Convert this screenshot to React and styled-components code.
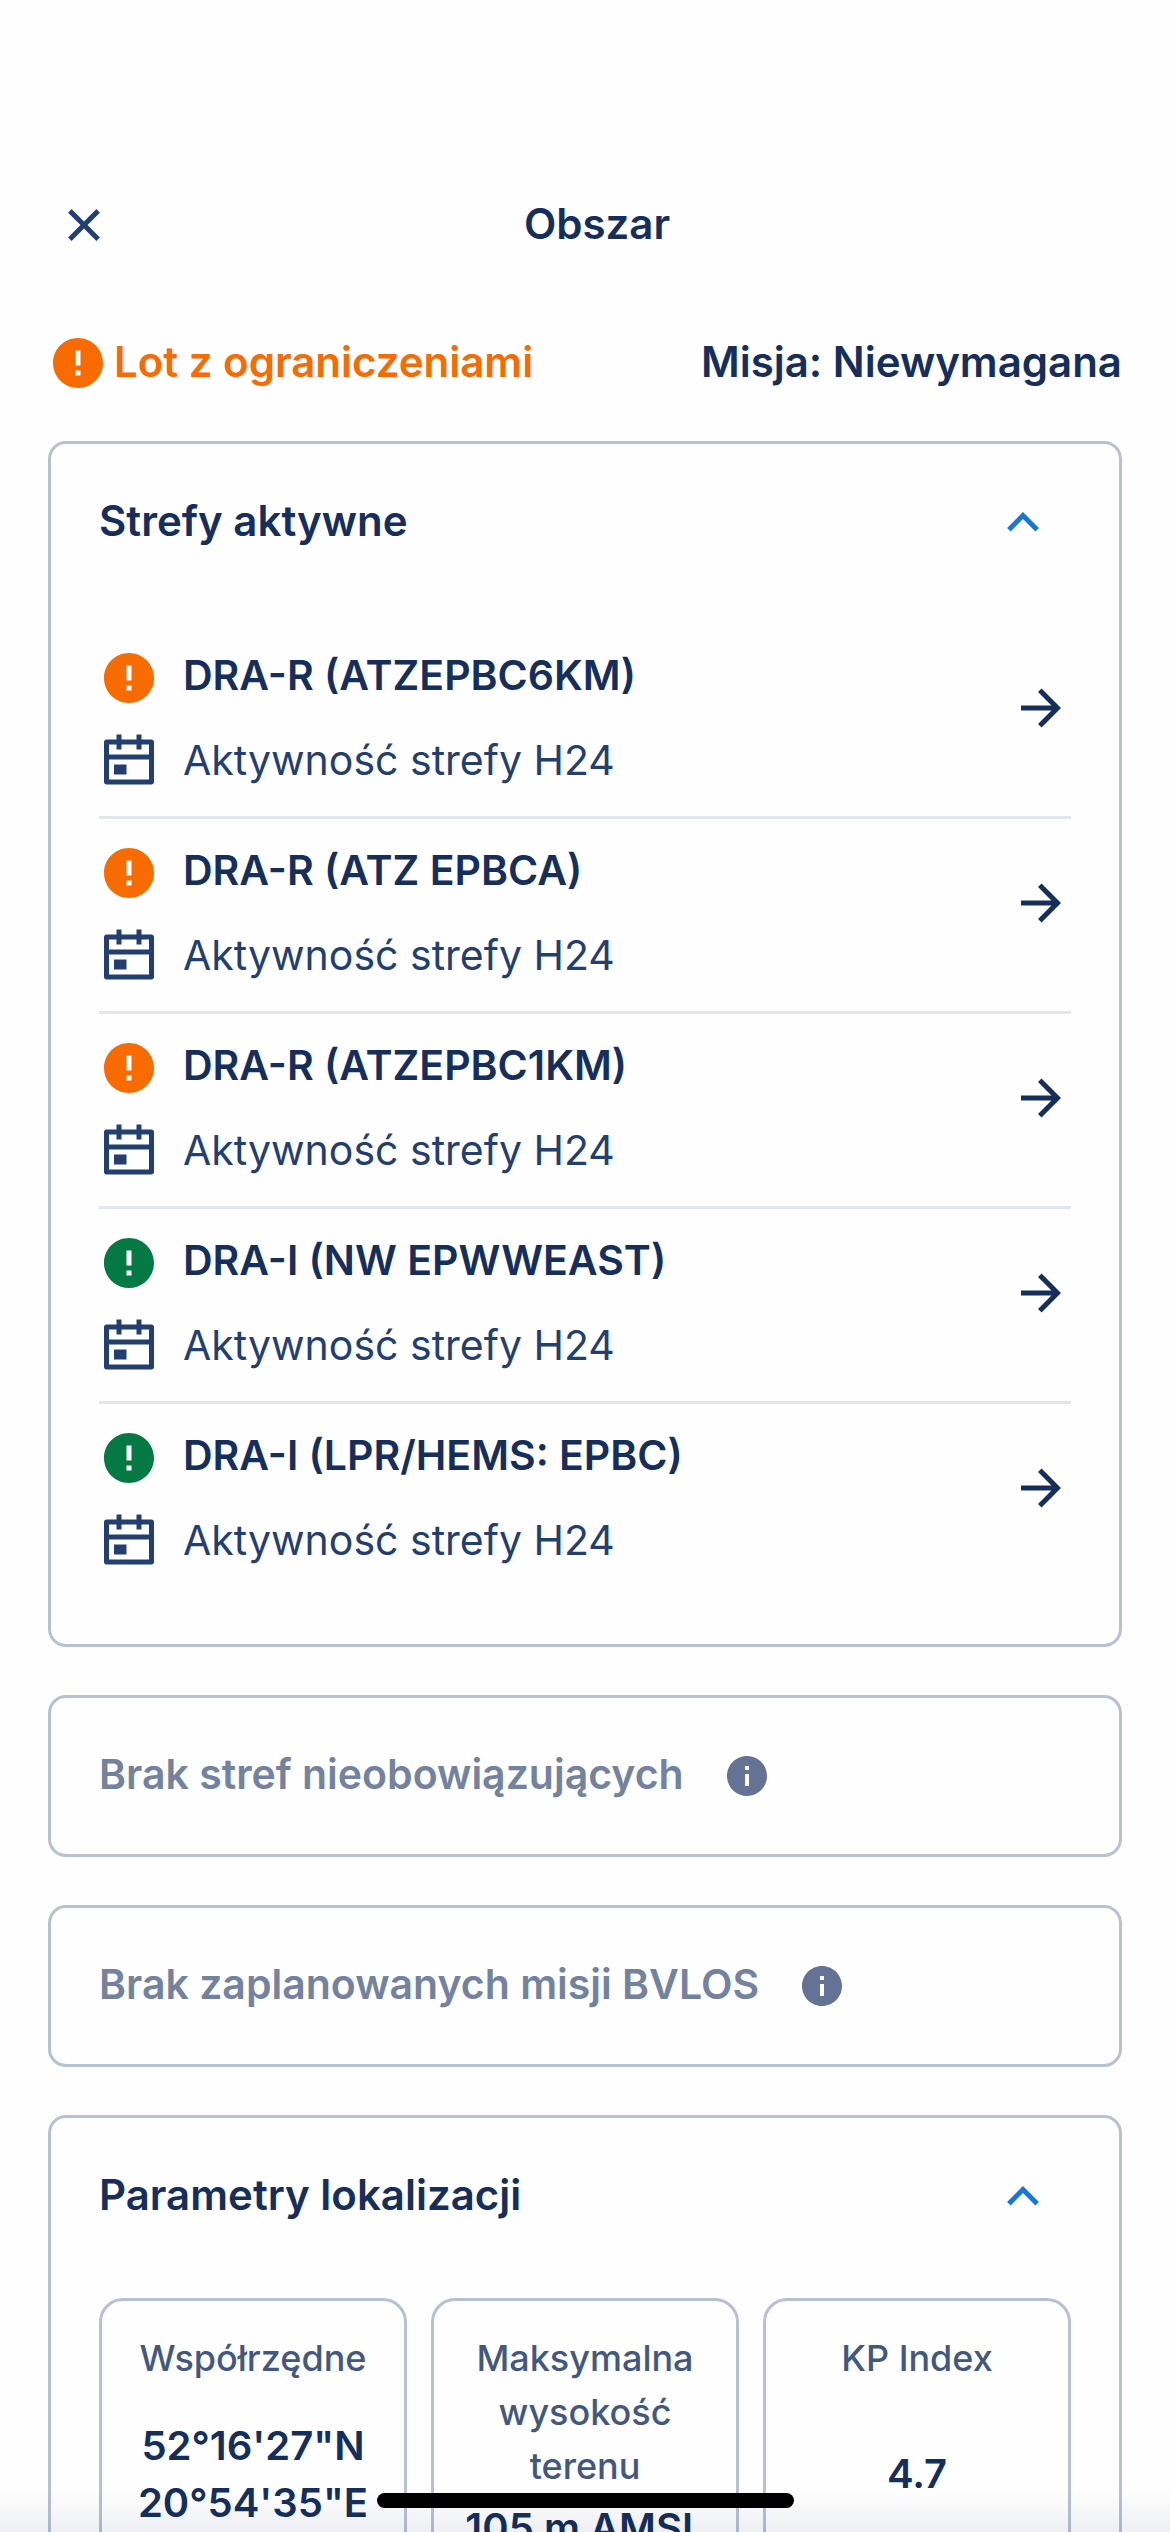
import React, { useState } from "react";
import styled, { createGlobalStyle } from "styled-components";
import {
  RiArrowRightLine,
  RiArrowUpSLine,
  RiCalendarEventLine,
  RiCloseLine,
  RiErrorWarningFill,
  RiInformationFill
} from "react-icons/ri";

const GlobalStyle = createGlobalStyle`
  * {
    box-sizing: border-box;
  }
  body {
    margin: 0;
    background: #fefefe;
    color: #152e5b;
    font-family: Inter, "Open Sans", sans-serif;
    font-size: 42px;
    line-height: 57px;
  }
  h1, h2, h3, p, ul, dl, dt, dd {
    margin: 0;
    padding: 0;
    font-size: inherit;
    font-weight: inherit;
  }
  svg {
    display: block;
    flex-shrink: 0;
  }
`;

const Screen = styled.div`
  height: 100vh;
  overflow-y: auto;
  scrollbar-width: none;
`;

const Header = styled.header`
  display: flex;
  align-items: center;
  padding: 195px 48px 0 54px;
`;

const IconButton = styled.button`
  display: flex;
  padding: 0;
  border: 0;
  background: none;
  color: ${props => props.color || "#152e5b"};
  cursor: pointer;
`;

const Title = styled.h1`
  flex: 1;
  padding: 0 42px 3px 0;
  text-align: center;
  font-weight: 600;
`;

const Status = styled.section`
  display: flex;
  justify-content: space-between;
  padding: 78px 48px 48px;
  font-weight: 600;
`;

const Warning = styled.p`
  display: flex;
  gap: 6px;
  color: #f76b00;
`;

const Content = styled.main`
  display: flex;
  flex-direction: column;
  gap: 48px;
  padding: 0 48px 96px;
`;

const Card = styled.section`
  padding: 48px;
  border: 3px solid #b8c1d2;
  border-radius: 18px;
`;

const CardHeader = styled.div`
  display: flex;
  align-items: center;
  justify-content: ${props => (props.$spread ? "space-between" : "flex-start")};
  gap: 39px;
  min-height: 60px;
  padding-right: 18px;
`;

const CardTitle = styled.h2`
  padding-bottom: 3px;
  color: ${props => (props.$muted ? "#73829f" : "#152e5b")};
  font-size: ${props => (props.$muted ? "41px" : "42px")};
  font-weight: 600;
`;

const Chevron = styled(RiArrowUpSLine)`
  transform: ${props => (props.$open ? "none" : "rotate(180deg)")};
`;

const CardBody = styled.div`
  padding-top: 72px;
`;

const ZoneList = styled.ul`
  list-style: none;
`;

const Zone = styled.li`
  display: flex;
  align-items: center;
  justify-content: space-between;
  padding: 24px 0;

  & + & {
    border-top: 3px solid #e2e6ee;
  }
`;

const ZoneInfo = styled.div`
  display: grid;
  grid-template-columns: 60px 1fr;
  gap: 24px;
  font-size: 41px;
`;

const ZoneName = styled.h3`
  font-weight: 600;
  line-height: 54px;
`;

const ZoneActivity = styled.p`
  color: #233f70;
`;

const ZoneButton = styled(IconButton)`
  padding-bottom: 24px;
`;

const Params = styled.dl`
  display: grid;
  grid-template-columns: repeat(3, 1fr);
  gap: 24px;
`;

const Param = styled.div`
  display: flex;
  flex-direction: column;
  gap: 6px;
  padding: 30px 24px;
  border: 3px solid #b8c1d2;
  border-radius: 24px;
  text-align: center;
`;

const ParamLabel = styled.dt`
  color: #43587f;
  font-size: 36px;
  font-weight: 500;
  line-height: 54px;
`;

const ParamValue = styled.dd`
  display: flex;
  flex: 1;
  flex-direction: column;
  justify-content: center;
  font-size: 40px;
  font-weight: 600;
  white-space: nowrap;
`;

const BottomFade = styled.div`
  position: fixed;
  right: 0;
  bottom: 0;
  left: 0;
  display: flex;
  justify-content: center;
  padding: 3px 0 24px;
  background: linear-gradient(#fff, #eff0f4);
  mix-blend-mode: multiply;
  pointer-events: none;
`;

const HomeIndicator = styled.div`
  width: 417px;
  height: 15px;
  border-radius: 8px;
  background: #000;
`;

const ORANGE = "#f76b00";
const GREEN = "#047944";

const zones = [
  { name: "DRA-R (ATZEPBC6KM)", color: ORANGE },
  { name: "DRA-R (ATZ EPBCA)", color: ORANGE },
  { name: "DRA-R (ATZEPBC1KM)", color: ORANGE },
  { name: "DRA-I (NW EPWWEAST)", color: GREEN },
  { name: "DRA-I (LPR/HEMS: EPBC)", color: GREEN }
];

const params = [
  { label: "Współrzędne", values: ["52°16'27\"N", "20°54'35\"E"] },
  { label: "Maksymalna wysokość terenu", values: ["105 m AMSL"] },
  { label: "KP Index", values: ["4.7"] }
];

const Accordion = ({ title, children }) => {
  const [open, setOpen] = useState(true);
  return (
    <Card>
      <CardHeader $spread>
        <CardTitle>{title}</CardTitle>
        <IconButton
          color="#1677d9"
          aria-label={title}
          aria-expanded={open}
          onClick={() => setOpen(!open)}
        >
          <Chevron size={60} $open={open} />
        </IconButton>
      </CardHeader>
      {open && <CardBody>{children}</CardBody>}
    </Card>
  );
};

const EmptyCard = ({ title }) => (
  <Card>
    <CardHeader>
      <CardTitle $muted>{title}</CardTitle>
      <IconButton color="#647296" aria-label={`Informacje: ${title}`}>
        <RiInformationFill size={48} />
      </IconButton>
    </CardHeader>
  </Card>
);

const App = () => (
  <>
    <GlobalStyle />
    <Screen>
      <Header>
        <IconButton color="#233f70" aria-label="Zamknij">
          <RiCloseLine size={60} />
        </IconButton>
        <Title>Obszar</Title>
      </Header>
      <Status>
        <Warning>
          <RiErrorWarningFill size={60} />
          Lot z ograniczeniami
        </Warning>
        <p>Misja: Niewymagana</p>
      </Status>
      <Content>
        <Accordion title="Strefy aktywne">
          <ZoneList>
            {zones.map(zone => (
              <Zone key={zone.name}>
                <ZoneInfo>
                  <RiErrorWarningFill size={60} color={zone.color} />
                  <ZoneName>{zone.name}</ZoneName>
                  <RiCalendarEventLine size={60} color="#233f70" />
                  <ZoneActivity>Aktywność strefy H24</ZoneActivity>
                </ZoneInfo>
                <ZoneButton aria-label={`Szczegóły: ${zone.name}`}>
                  <RiArrowRightLine size={60} />
                </ZoneButton>
              </Zone>
            ))}
          </ZoneList>
        </Accordion>
        <EmptyCard title="Brak stref nieobowiązujących" />
        <EmptyCard title="Brak zaplanowanych misji BVLOS" />
        <Accordion title="Parametry lokalizacji">
          <Params>
            {params.map(param => (
              <Param key={param.label}>
                <ParamLabel>{param.label}</ParamLabel>
                <ParamValue>
                  {param.values.map(value => (
                    <span key={value}>{value}</span>
                  ))}
                </ParamValue>
              </Param>
            ))}
          </Params>
        </Accordion>
      </Content>
    </Screen>
    <BottomFade>
      <HomeIndicator />
    </BottomFade>
  </>
);

export default App;
